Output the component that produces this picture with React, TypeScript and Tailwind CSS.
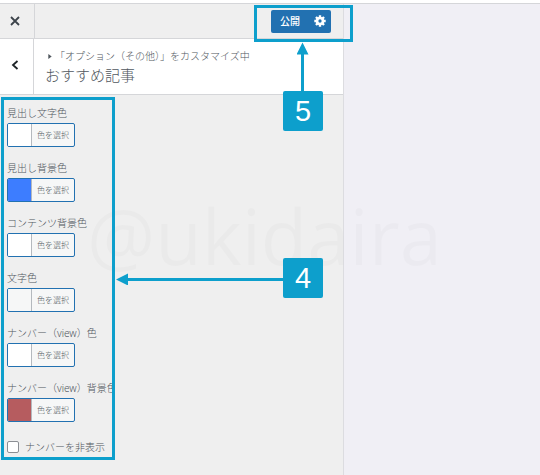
import { useState } from "react";

type ColorField = { id: string; label: string; swatch: string };

const FIELDS: ColorField[] = [
  { id: "heading-text", label: "見出し文字色", swatch: "bg-white" },
  { id: "heading-bg", label: "見出し背景色", swatch: "bg-[#3d7dff]" },
  { id: "content-bg", label: "コンテンツ背景色", swatch: "bg-white" },
  { id: "text", label: "文字色", swatch: "bg-[#f6f7f7]" },
  { id: "number-text", label: "ナンバー（view）色", swatch: "bg-white" },
  { id: "number-bg", label: "ナンバー（view）背景色", swatch: "bg-[#b65c5f]" },
];

function ColorRow({ field }: { field: ColorField }) {
  return (
    <div className="flex flex-col items-start">
      <span id={field.id} className="h-[18px] whitespace-nowrap text-[10px] leading-[16px]">
        {field.label}
      </span>
      <button
        type="button"
        aria-describedby={field.id}
        className="flex h-6 overflow-hidden rounded-[2px] border border-[#2271b1] bg-[#f6f7f7]"
      >
        <span className={`h-full w-6 border-r border-[#b4b9be] ${field.swatch}`} />
        <span className="px-[5px] text-[8px] leading-[22px]">色を選択</span>
      </button>
    </div>
  );
}

function Header() {
  return (
    <header className="flex h-[35px] border-b border-[#d5d6d9]">
      <button
        type="button"
        aria-label="閉じる"
        className="flex w-[35px] items-center justify-center border-r border-[#d5d6d9] pr-1 text-[#3c434a]"
      >
        <svg viewBox="0 0 10 10" className="size-[10px]" fill="none" stroke="currentColor" strokeWidth="1.8">
          <path d="M1 1l8 8M9 1l-8 8" />
        </svg>
      </button>
      <div className="flex flex-1 items-center justify-end pr-3">
        <button
          type="button"
          className="h-[23px] rounded-l-[2px] bg-[#2271b1] pr-2 pl-[9px] text-[10px] font-medium text-white"
        >
          公開
        </button>
        <button
          type="button"
          aria-label="公開設定"
          className="flex h-[23px] w-[23px] items-center justify-center rounded-r-[2px] bg-[#2271b1] text-white"
        >
          <svg viewBox="-10 -10 20 20" className="size-3" fill="none" stroke="currentColor">
            <circle r="5" strokeWidth="4.500" />
            <path d="M0-9.500v4M0 9.500v-4M-9.500 0h4M9.500 0h-4M-6.700-6.700l3 3M6.700 6.700l-3-3M-6.700 6.700l3-3M6.700-6.700l-3 3" strokeWidth="4" />
          </svg>
        </button>
      </div>
    </header>
  );
}

function SectionTitle() {
  return (
    <div className="flex h-14 border-b border-[#d5d6d9] bg-white">
      <button
        type="button"
        aria-label="戻る"
        className="flex w-[34px] items-center justify-center border-r border-[#d5d6d9] pr-1 pb-1 text-[#1d2327]"
      >
        <svg viewBox="0 0 8 10" className="h-[10px] w-2" fill="none" stroke="currentColor" strokeWidth="1.8">
          <path d="M6.500 1L2 5l4.500 4" />
        </svg>
      </button>
      <div className="pt-[9px] pl-[11px]">
        <p className="flex items-center text-[10px] leading-4">
          <svg viewBox="0 0 4 6" className="mr-[3px] ml-[3px] h-[5px] w-[4px]" fill="currentColor">
            <path d="M0 0l4 3-4 3z" />
          </svg>
          「オプション（その他）」をカスタマイズ中
        </p>
        <h1 className="text-[15px] leading-[22px] text-[#50575e]">おすすめ記事</h1>
      </div>
    </div>
  );
}

function Badge({ children, className }: { children: string; className: string }) {
  return (
    <div
      className={`absolute flex size-10 items-center justify-center rounded-[2px] bg-[#0d9fcc] font-['Liberation_Sans',sans-serif] text-[29px] leading-none font-normal text-white ${className}`}
    >
      {children}
    </div>
  );
}

// Callouts drawn on top of the customizer
function Annotations() {
  return (
    <div className="pointer-events-none absolute inset-0">
      <div className="absolute top-[97px] left-px h-[363px] w-[114px] border-3 border-[#0d9fcc]" />
      <div className="absolute top-[5px] left-[254px] h-[37px] w-[99px] border-3 border-[#0d9fcc]" />
      <svg className="absolute top-[273px] left-[116px] h-3 w-[168px]" viewBox="0 0 168 12" fill="#0d9fcc">
        <path d="M0 6.500L12 .5v12zM11 5h157v3H11z" />
      </svg>
      <svg className="absolute top-[42px] left-[297px] h-[50px] w-3" viewBox="0 0 12 50" fill="#0d9fcc">
        <path d="M5.500 .5L11.500 12.500h-12zM4 12h3v38H4z" />
      </svg>
      <Badge className="top-[91px] left-[283px]">5</Badge>
      <Badge className="top-[258px] left-[283px]">4</Badge>
    </div>
  );
}

export default function App() {
  const [hidden, setHidden] = useState(false);

  return (
    <div className="relative flex min-h-screen flex-col overflow-hidden bg-[#f0eff5] font-['Noto_Sans','Noto_Sans_CJK_JP',sans-serif] font-light text-[#50575e]">
      <div className="h-1 border-b border-[#d5d6d9] bg-white" />
      <div className="flex flex-1">
        <aside className="w-[344px] shrink-0 border-r border-[#dcdce0] bg-[#efefef]">
          <Header />
          <SectionTitle />
          <div className="w-[115px] overflow-hidden pt-[10px] pl-[7px]">
            <div className="flex flex-col gap-[13px]">
              {FIELDS.map((field) => (
                <ColorRow key={field.id} field={field} />
              ))}
            </div>
            <label className="mt-[17px] flex items-center gap-[6px] text-[10px] leading-4 whitespace-nowrap">
              <input
                type="checkbox"
                checked={hidden}
                onChange={(e) => setHidden(e.target.checked)}
                className="size-3 appearance-none rounded-[2px] border border-[#8c8f94] bg-white checked:bg-[#2271b1]"
              />
              ナンバーを非表示
            </label>
          </div>
        </aside>
        <main className="flex-1" />
      </div>
      <div className="pointer-events-none absolute top-[184px] left-[87px] font-['Open_Sans',sans-serif] text-[76px] leading-[104px] font-normal text-black/[0.02]">
        @ukidaira
      </div>
      <Annotations />
    </div>
  );
}
